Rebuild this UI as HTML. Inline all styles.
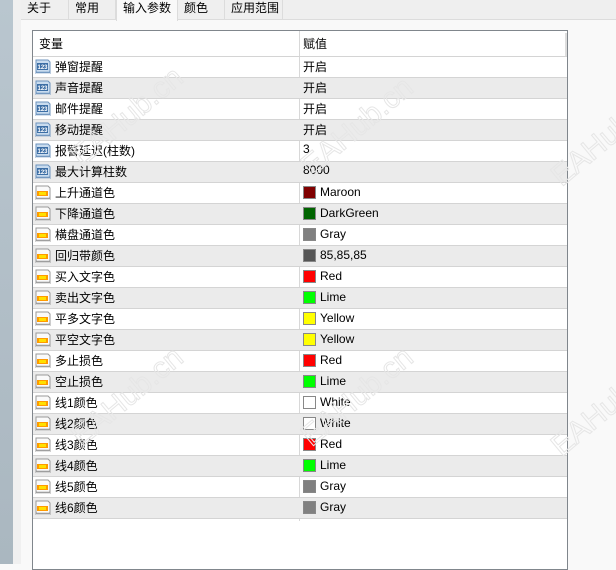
<!DOCTYPE html>
<html><head><meta charset="utf-8"><style>
*{margin:0;padding:0;box-sizing:border-box}
body{width:616px;height:564px;overflow:hidden;background:#f9f9f9;font-family:"Liberation Sans","Noto Sans CJK SC",sans-serif;font-size:12px;color:#000;position:relative}
.strip{position:absolute;left:0;top:0;width:13px;height:564px;background:linear-gradient(#b9c6cf,#aab7c0)}
.strip2{position:absolute;left:13px;top:0;width:8px;height:564px;background:#f0f0f0}
.tabbar{position:absolute;left:21px;top:0;width:595px;height:20px;background:#efefef;border-bottom:1px solid #dcdcdc}
.tab{position:absolute;top:0;height:20px;line-height:17px;padding-left:6px;border-right:1px solid #dcdcdc}
.tab.act{background:#f9f9f9;height:21px;border-left:1px solid #dcdcdc;border-right:1px solid #dcdcdc}
.tbl{position:absolute;left:32px;top:30px;width:536px;height:540px;border:1px solid #80868c;background:#fff}
.hdr{position:absolute;left:0;top:0;width:534px;height:25px}
.hdr span{position:absolute;top:4px}
.vline{position:absolute;left:266px;top:0;width:1px;height:490px;background:#d8d8d8}
.row{position:absolute;left:0;width:534px;height:21px;border-top:1px solid #d4d4d4}
.row.g{background:#ebebeb}
.row .n{position:absolute;left:22px;top:1px}
.row .v{position:absolute;left:270px;top:1px}
.row .vc{position:absolute;left:287px;top:2px}
.sw{position:absolute;left:270px;top:3px;width:13px;height:13px;border:1px solid #888}
.ic{position:absolute;left:2px;top:2px;width:16px;height:15px}
.wm{position:absolute;color:transparent;-webkit-text-stroke:1px #e6e6e6;font-size:30px;font-family:"Liberation Sans",sans-serif;transform:rotate(-40deg);white-space:nowrap}
.sb{position:absolute;left:532px;top:2px;width:2px;height:24px;background:#ddd}
</style></head><body>
<div class="strip"></div><div class="strip2"></div>
<div class="tabbar">
<div class="tab" style="left:0;width:48px">关于</div>
<div class="tab" style="left:48px;width:47px">常用</div>
<div class="tab act" style="left:95px;width:62px">输入参数</div>
<div class="tab" style="left:157px;width:47px">颜色</div>
<div class="tab" style="left:204px;width:58px">应用范围</div>
</div>
<div class="tbl">
<div class="hdr"><span style="left:6px">变量</span><span style="left:270px">赋值</span></div>
<div class="sb"></div>
<div class="vline"></div>
<div id="rows"></div>
</div>
<div class="wm" style="left:60px;top:100px">EAHub.cn</div>
<div class="wm" style="left:290px;top:110px">EAHub.cn</div>
<div class="wm" style="left:540px;top:120px">EAHub.cn</div>
<div class="wm" style="left:60px;top:380px">EAHub.cn</div>
<div class="wm" style="left:290px;top:380px">EAHub.cn</div>
<div class="wm" style="left:540px;top:390px">EAHub.cn</div>
<script>
var N='<svg class="ic" viewBox="0 0 16 15"><path d="M1 1h12l2 2v11l-1-1-1 1-1-1-1 1-1-1-1 1-1-1-1 1-1-1-1 1-1-1-1 1-1-1-1 1z" fill="#c9dcef" stroke="#6d93bd"/><rect x="2" y="4" width="11" height="7" fill="#3c6ea5"/><text x="7.5" y="10" font-size="6" fill="#fff" text-anchor="middle" font-family="Liberation Sans" font-weight="bold">123</text></svg>';
var C='<svg class="ic" viewBox="0 0 16 15"><path d="M1 1h12l2 2v11l-1-1-1 1-1-1-1 1-1-1-1 1-1-1-1 1-1-1-1 1-1-1-1 1-1-1-1 1z" fill="#fafafa" stroke="#999"/><rect x="2" y="6" width="11" height="5" fill="#ff9a00"/><rect x="4" y="7" width="7" height="3" fill="#ffe000"/></svg>';
var d=[["弹窗提醒","开启"],["声音提醒","开启"],["邮件提醒","开启"],["移动提醒","开启"],["报警延迟(柱数)","3"],["最大计算柱数","8000"],
["上升通道色","Maroon","#800000"],["下降通道色","DarkGreen","#006400"],["横盘通道色","Gray","#808080"],["回归带颜色","85,85,85","#555555"],
["买入文字色","Red","#ff0000"],["卖出文字色","Lime","#00ff00"],["平多文字色","Yellow","#ffff00"],["平空文字色","Yellow","#ffff00"],
["多止损色","Red","#ff0000"],["空止损色","Lime","#00ff00"],["线1颜色","White","#ffffff"],["线2颜色","White","#ffffff"],
["线3颜色","Red","#ff0000"],["线4颜色","Lime","#00ff00"],["线5颜色","Gray","#808080"],["线6颜色","Gray","#808080"]];
var h='';
d.forEach(function(r,i){
 var top=25+i*21;
 h+='<div class="row'+(i%2?' g':'')+'" style="top:'+top+'px">'+(r[2]?C:N)+'<span class="n">'+r[0]+'</span>';
 if(r[2]){h+='<div class="sw" style="background:'+r[2]+'"></div><span class="vc">'+r[1]+'</span>';}
 else h+='<span class="v">'+r[1]+'</span>';
 h+='</div>';
});
h+='<div class="row" style="top:'+(25+22*21)+'px;height:1px"></div>';
document.getElementById('rows').innerHTML=h;
</script>
</body></html>
